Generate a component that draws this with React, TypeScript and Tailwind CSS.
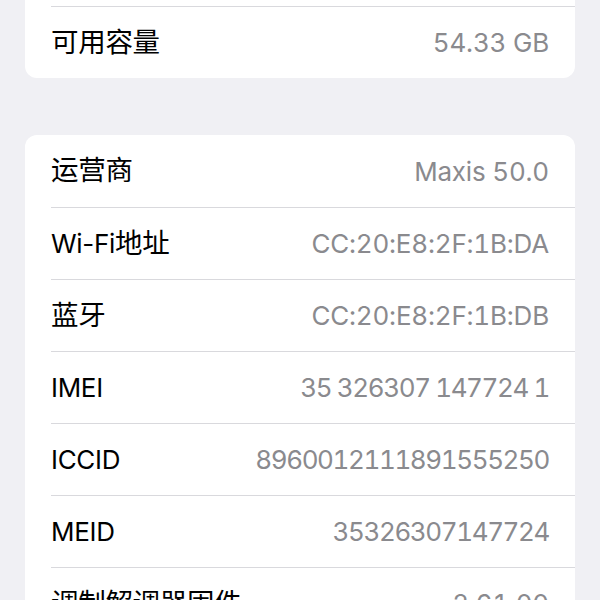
import React from "react";

const font = { fontFamily: 'Inter, "Noto Sans CJK SC", sans-serif' };

type Item = { label: string; value: string; digits?: boolean };

const storage: Item = { label: "可用容量", value: "54.33 GB" };

const network: Item[] = [
  { label: "运营商", value: "Maxis 50.0" },
  { label: "Wi-Fi地址", value: "CC:20:E8:2F:1B:DA" },
  { label: "蓝牙", value: "CC:20:E8:2F:1B:DB" },
  { label: "IMEI", value: "35 326307 147724 1", digits: true },
  { label: "ICCID", value: "8960012111891555250", digits: true },
  { label: "MEID", value: "35326307147724", digits: true },
  { label: "调制解调器固件", value: "2.61.00" },
];

// CJK glyphs render a touch larger than the latin ones in the reference
function Label({ text }: { text: string }) {
  const parts = text.split(/([\u4e00-\u9fff]+)/).filter(Boolean);
  return (
    <span className="text-[26px] tracking-[-0.3px] text-black">
      {parts.map((p, i) =>
        /[\u4e00-\u9fff]/.test(p) ? (
          <span key={i} className="text-[27.5px]">
            {p}
          </span>
        ) : (
          <span key={i}>{p}</span>
        )
      )}
    </span>
  );
}

function Row({ item, first }: { item: Item; first?: boolean }) {
  return (
    <div className="pl-[26px]">
      <div
        className={`flex h-[72px] items-center justify-between pr-[26px] ${
          first ? "" : "border-t border-[#d9d9dd]"
        }`}
      >
        <Label text={item.label} />
        <span
          className={`text-[26px] tabular-nums text-[#8a8a8e] ${
            item.digits ? "tracking-[-1.4px]" : "tracking-[-0.2px]"
          }`}
        >
          {item.value}
        </span>
      </div>
    </div>
  );
}

export default function App() {
  return (
    <div className="h-[600px] w-[600px] overflow-hidden bg-[#f0f0f4]" style={font}>
      <div className="px-[25px]">
        {/* Storage group, scrolled so only its last row shows */}
        <div className="-mt-[12px] overflow-hidden rounded-b-[12px] bg-white">
          <div className="h-[18px]" />
          <Row item={storage} />
        </div>

        {/* Network group */}
        <div className="mt-[57px] overflow-hidden rounded-[12px] bg-white">
          {network.map((item, i) => (
            <Row key={item.label} item={item} first={i === 0} />
          ))}
        </div>
      </div>
    </div>
  );
}
